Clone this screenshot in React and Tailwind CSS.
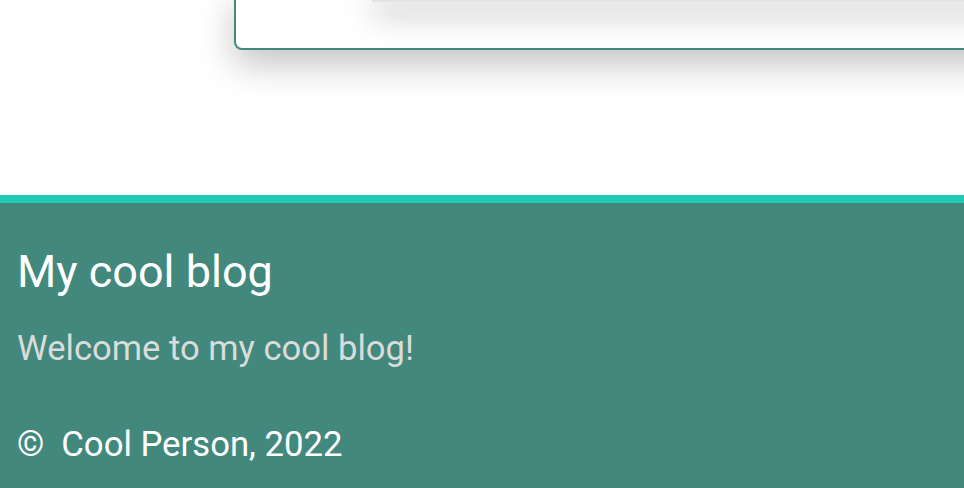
export default function App() {
  return (
    <div className="w-[964px] h-[488px] overflow-hidden bg-white font-['Roboto',sans-serif]">
      <div className="h-[195px] flex flex-col">
        <div className="ml-[234px] w-[800px] h-[60px] shrink-0 -mt-[10px] border-2 border-[#44877c] rounded-lg bg-white shadow-[0_14px_36px_rgba(0,0,0,0.24)]">
          <div className="ml-[136px] h-[10px] bg-[#e4e4e4] shadow-[0_12px_30px_rgba(0,0,0,0.34)]"></div>
        </div>
      </div>
      <footer className="h-[293px] border-t-[8px] border-[#20cbb5] bg-[#43887d] px-[17px]">
        <h1 className="pt-[43px] text-[45px] leading-[52px] text-white">My cool blog</h1>
        <p className="mt-[30px] text-[34.6px] leading-[40px] text-[#d8dcdb]">Welcome to my cool blog!</p>
        <p className="mt-[56px] text-[34.7px] leading-[40px] text-white">
          <span className="mr-[17px]">©</span>Cool Person, 2022
        </p>
      </footer>
    </div>
  );
}
